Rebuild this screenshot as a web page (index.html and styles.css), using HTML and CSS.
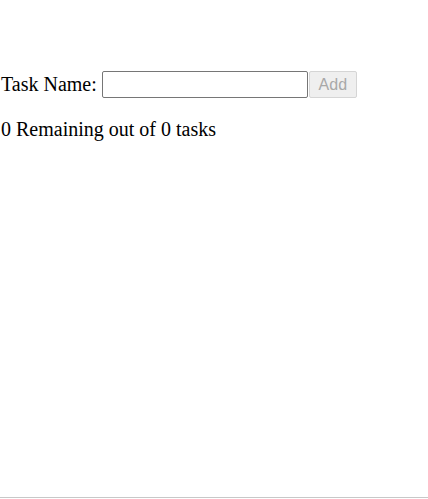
FILE: index.html
```html
<!DOCTYPE html>
<html>
<head>
<meta charset="utf-8">
<link rel="stylesheet" href="styles.css">
</head>
<body>
<div class="page">
  <form class="task-form">
    <label class="label" for="task">Task Name:</label>
    <input class="task-input" id="task" type="text">
    <button class="add-btn" type="button" disabled>Add</button>
  </form>
  <p class="summary">0 Remaining out of 0 tasks</p>
</div>
<div class="bottom-line"></div>
</body>
</html>
```

FILE: styles.css
```css
html, body {
  margin: 0;
  padding: 0;
  height: 100%;
}
body {
  font-family: "Liberation Serif", "Times New Roman", serif;
  font-size: 20px;
  color: #000;
  background: #fff;
  display: flex;
  flex-direction: column;
}
.page {
  flex: 1;
  padding: 71px 0 0 1px;
}
.task-form {
  display: flex;
  align-items: center;
  margin: 0;
}
.label {
  margin-right: 5px;
}
.task-input {
  width: 206px;
  height: 27px;
  box-sizing: border-box;
  border: 1px solid #767676;
  border-radius: 2px;
  padding: 1px 2px;
  font-size: 16px;
  margin: 0 1px 0 0;
}
.add-btn {
  height: 27px;
  width: 48px;
  box-sizing: border-box;
  font-family: "Liberation Sans", Arial, sans-serif;
  font-size: 16px;
  color: #a8a8a8;
  background: #efefef;
  border: 1px solid #d5d5d5;
  border-radius: 2px;
  padding: 0;
}
.summary {
  margin: 20px 0 0 0;
}
.bottom-line {
  height: 1px;
  background: #c8c8c8;
  margin-bottom: 1px;
}
```
